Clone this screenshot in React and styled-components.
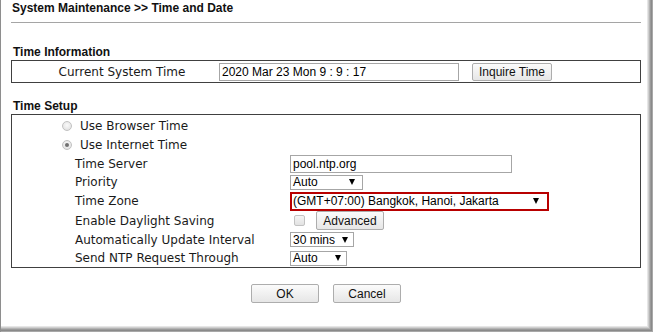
import React from "react";
import styled, { createGlobalStyle } from "styled-components";

const GlobalStyle = createGlobalStyle`
  body {
    margin: 0;
    background: #fff;
  }
`;

const Frame = styled.div`
  width: 653px;
  height: 332px;
  box-sizing: border-box;
  border-left: 1px solid #8e8e8e;
  overflow: hidden;
  box-shadow: inset -1px -1px 0 #a8a8a8, inset -2px -2px 0 #8a8a8a,
    inset -3px -3px 0 #9a9a9a, inset -4px -4px 0 #b4b4b4,
    inset -5px -5px 0 #cfcfcf, inset -6px -6px 0 #e6e6e6;
`;

const Content = styled.div`
  margin-left: 10px;
  width: 630px;
`;

const Title = styled.div`
  font: bold 12px "Liberation Sans", Arial, sans-serif;
  line-height: 14px;
  color: #111;
  height: 23px;
  padding: 1px 0 0 1px;
  box-sizing: border-box;
  border-bottom: 1px solid #a5a5a5;
`;

const Heading = styled.div`
  font: bold 12px "Liberation Sans", Arial, sans-serif;
  line-height: 14px;
  color: #111;
  padding-left: 2px;
  margin-top: ${(p) => p.top}px;
  margin-bottom: 1px;
`;

const Box = styled.div`
  border: 1px solid #404040;
  padding-top: ${(p) => p.pad || 0}px;
`;

const InfoRow = styled.div`
  display: flex;
  align-items: center;
  height: 21px;
`;

const InfoLabel = styled.div`
  width: 207px;
  padding-left: 13px;
  box-sizing: border-box;
  text-align: center;
  font: 12px "DejaVu Sans", Verdana, sans-serif;
  color: #1a1a1a;
`;

const TextInput = styled.input`
  width: ${(p) => p.w}px;
  height: 18px;
  box-sizing: border-box;
  border: 1px solid #a6a6a6;
  padding: 0 2px;
  margin: 0;
  font: 12px "Liberation Sans", Arial, sans-serif;
  color: #000;
  background: #fff;
  outline: none;
`;

const Button = styled.button`
  width: ${(p) => p.w}px;
  height: ${(p) => p.h || 18}px;
  margin: 0 0 0 ${(p) => p.ml || 0}px;
  padding: 0;
  box-sizing: border-box;
  border: 1px solid #adadad;
  border-radius: 2px;
  background: linear-gradient(#fbfbfb, #e6e6e6);
  font: 12px "Liberation Sans", Arial, sans-serif;
  color: #111;
`;

const RadioRow = styled.div`
  display: flex;
  align-items: center;
  height: ${(p) => p.h}px;
  padding-left: 50px;
  font: 12px "DejaVu Sans", Verdana, sans-serif;
  color: #1a1a1a;
`;

const Radio = styled.span`
  position: relative;
  width: 10px;
  height: 10px;
  box-sizing: border-box;
  border: 1px solid #c2c2c2;
  border-radius: 50%;
  background: radial-gradient(circle at 50% 40%, #fafafa, #dcdcdc);
  margin-right: 8px;

  &::after {
    content: "";
    display: ${(p) => (p.checked ? "block" : "none")};
    position: absolute;
    left: 2px;
    top: 2px;
    width: 4px;
    height: 4px;
    border-radius: 50%;
    background: #707070;
  }
`;

const FieldRow = styled.div`
  display: grid;
  grid-template-columns: 215px auto;
  align-items: center;
  height: ${(p) => p.h}px;
  padding-left: 63px;
  font: 12px "DejaVu Sans", Verdana, sans-serif;
  color: #1a1a1a;
`;

const Value = styled.div`
  display: flex;
  align-items: center;
`;

const Select = styled.div`
  display: flex;
  align-items: center;
  width: ${(p) => p.w}px;
  height: ${(p) => p.h || 15}px;
  box-sizing: border-box;
  border: ${(p) => (p.alert ? "2px solid #b80000" : "1px solid #a6a6a6")};
  padding: 0 ${(p) => p.pr || 5}px 0 ${(p) => (p.alert ? 1 : 2)}px;
  font: 12px "Liberation Sans", Arial, sans-serif;
  color: #000;
  background: #fff;
`;

const Arrow = styled.span`
  margin-left: auto;
  width: 0;
  height: 0;
  border-left: 3.5px solid transparent;
  border-right: 3.5px solid transparent;
  border-top: 6px solid #000;
`;

const Check = styled.span`
  width: 11px;
  height: 11px;
  box-sizing: border-box;
  margin-left: 4px;
  border: 1px solid #c2c2c2;
  border-radius: 2px;
  background: linear-gradient(#f4f4f4, #e2e2e2);
`;

const ButtonBar = styled.div`
  display: flex;
  justify-content: center;
  gap: 14px;
  margin-top: 16px;
`;

const fields = [
  { label: "Time Server", h: 19, kind: "input" },
  { label: "Priority", h: 18, kind: "select", text: "Auto", w: 73, pr: 7 },
  { label: "Time Zone", h: 20, kind: "zone" },
  { label: "Enable Daylight Saving", h: 19, kind: "daylight" },
  { label: "Automatically Update Interval", h: 19, kind: "select", text: "30 mins", w: 64, pr: 5 },
  { label: "Send NTP Request Through", h: 18, kind: "select", text: "Auto", w: 57, pr: 5 },
];

function FieldValue({ f }) {
  if (f.kind === "input") {
    return <TextInput w={222} defaultValue="pool.ntp.org" readOnly />;
  }
  if (f.kind === "zone") {
    return (
      <Select w={259} h={19} pr={8} alert>
        (GMT+07:00) Bangkok, Hanoi, Jakarta
        <Arrow />
      </Select>
    );
  }
  if (f.kind === "daylight") {
    return (
      <Value>
        <Check />
        <Button w={68} h={19} ml={11}>
          Advanced
        </Button>
      </Value>
    );
  }
  return (
    <Select w={f.w} pr={f.pr}>
      {f.text}
      <Arrow />
    </Select>
  );
}

export default function App() {
  return (
    <Frame>
      <GlobalStyle />
      <Content>
        <Title>System Maintenance &gt;&gt; Time and Date</Title>

        <Heading top={22}>Time Information</Heading>
        <Box>
          <InfoRow>
            <InfoLabel>Current System Time</InfoLabel>
            <TextInput w={240} defaultValue="2020 Mar 23 Mon 9 : 9 : 17" readOnly />
            <Button w={80} ml={13}>
              Inquire Time
            </Button>
          </InfoRow>
        </Box>

        <Heading top={16}>Time Setup</Heading>
        <Box pad={2}>
          <RadioRow h={18}>
            <Radio />
            Use Browser Time
          </RadioRow>
          <RadioRow h={19}>
            <Radio checked />
            Use Internet Time
          </RadioRow>
          {fields.map((f) => (
            <FieldRow key={f.label} h={f.h}>
              <span>{f.label}</span>
              <Value>
                <FieldValue f={f} />
              </Value>
            </FieldRow>
          ))}
        </Box>

        <ButtonBar>
          <Button w={68} h={19}>
            OK
          </Button>
          <Button w={68} h={19}>
            Cancel
          </Button>
        </ButtonBar>
      </Content>
    </Frame>
  );
}
